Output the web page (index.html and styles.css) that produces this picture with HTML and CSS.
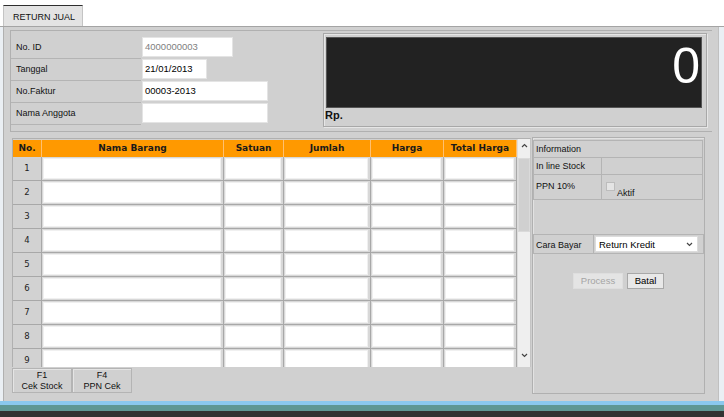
FILE: index.html
```html
<!DOCTYPE html>
<html>
<head>
<meta charset="utf-8">
<title>Return Jual</title>
<link rel="stylesheet" href="styles.css">
</head>
<body>
<div class="tabbar"><div class="tab">RETURN JUAL</div></div>
<div class="panel">
  <div class="top">
    <div class="form">
      <div class="frow"><span class="flabel">No. ID</span><span class="input w91 muted">4000000003</span></div>
      <div class="frow"><span class="flabel">Tanggal</span><span class="input w65">21/01/2013</span></div>
      <div class="frow"><span class="flabel">No.Faktur</span><span class="input w126">00003-2013</span></div>
      <div class="frow"><span class="flabel">Nama Anggota</span><span class="input w126"></span></div>
    </div>
    <div class="display">
      <div class="screenbox"><span class="amount">0</span></div>
      <div class="rp">Rp.</div>
    </div>
  </div>
  <div class="main">
    <div class="left">
      <div class="grid">
        <div class="scroll">
          <div class="hrow">
            <div class="hc c1">No.</div>
            <div class="hc c2">Nama Barang</div>
            <div class="hc c3">Satuan</div>
            <div class="hc c4">Jumlah</div>
            <div class="hc c5">Harga</div>
            <div class="hc c6">Total Harga</div>
          </div>
          <div class="row"><div class="num c1">1</div><div class="dc c2"><div class="box"></div></div><div class="dc c3"><div class="box"></div></div><div class="dc c4"><div class="box"></div></div><div class="dc c5"><div class="box"></div></div><div class="dc c6"><div class="box"></div></div></div>
          <div class="row"><div class="num c1">2</div><div class="dc c2"><div class="box"></div></div><div class="dc c3"><div class="box"></div></div><div class="dc c4"><div class="box"></div></div><div class="dc c5"><div class="box"></div></div><div class="dc c6"><div class="box"></div></div></div>
          <div class="row"><div class="num c1">3</div><div class="dc c2"><div class="box"></div></div><div class="dc c3"><div class="box"></div></div><div class="dc c4"><div class="box"></div></div><div class="dc c5"><div class="box"></div></div><div class="dc c6"><div class="box"></div></div></div>
          <div class="row"><div class="num c1">4</div><div class="dc c2"><div class="box"></div></div><div class="dc c3"><div class="box"></div></div><div class="dc c4"><div class="box"></div></div><div class="dc c5"><div class="box"></div></div><div class="dc c6"><div class="box"></div></div></div>
          <div class="row"><div class="num c1">5</div><div class="dc c2"><div class="box"></div></div><div class="dc c3"><div class="box"></div></div><div class="dc c4"><div class="box"></div></div><div class="dc c5"><div class="box"></div></div><div class="dc c6"><div class="box"></div></div></div>
          <div class="row"><div class="num c1">6</div><div class="dc c2"><div class="box"></div></div><div class="dc c3"><div class="box"></div></div><div class="dc c4"><div class="box"></div></div><div class="dc c5"><div class="box"></div></div><div class="dc c6"><div class="box"></div></div></div>
          <div class="row"><div class="num c1">7</div><div class="dc c2"><div class="box"></div></div><div class="dc c3"><div class="box"></div></div><div class="dc c4"><div class="box"></div></div><div class="dc c5"><div class="box"></div></div><div class="dc c6"><div class="box"></div></div></div>
          <div class="row"><div class="num c1">8</div><div class="dc c2"><div class="box"></div></div><div class="dc c3"><div class="box"></div></div><div class="dc c4"><div class="box"></div></div><div class="dc c5"><div class="box"></div></div><div class="dc c6"><div class="box"></div></div></div>
          <div class="row"><div class="num c1">9</div><div class="dc c2"><div class="box"></div></div><div class="dc c3"><div class="box"></div></div><div class="dc c4"><div class="box"></div></div><div class="dc c5"><div class="box"></div></div><div class="dc c6"><div class="box"></div></div></div>
        </div>
        <div class="scrollbar">
          <div class="arrow"><svg width="7" height="5" viewBox="0 0 7 5"><polyline points="1,4 3.5,1.5 6,4" fill="none" stroke="#444" stroke-width="1.2"/></svg></div>
          <div class="thumb"></div>
          <div class="track"></div>
          <div class="arrow"><svg width="7" height="5" viewBox="0 0 7 5"><polyline points="1,1 3.5,3.5 6,1" fill="none" stroke="#444" stroke-width="1.2"/></svg></div>
        </div>
      </div>
      <div class="fkeys">
        <div class="fkey">F1<br>Cek Stock</div>
        <div class="fkey">F4<br>PPN Cek</div>
      </div>
    </div>
    <div class="side">
      <div class="info">
        <div class="irow h17"><div class="icell full">Information</div></div>
        <div class="irow h17"><div class="icell lc">In line Stock</div><div class="icell rc"></div></div>
        <div class="irow h25"><div class="icell lc mid">PPN 10%</div><div class="icell rc chk"><span class="cbox"></span><span class="aktif">Aktif</span></div></div>
      </div>
      <div class="pay">
        <div class="paylabel">Cara Bayar</div>
        <div class="select"><span>Return Kredit</span><svg width="7" height="5" viewBox="0 0 7 5"><polyline points="1,1 3.5,3.5 6,1" fill="none" stroke="#444" stroke-width="1.2"/></svg></div>
      </div>
      <div class="actions">
        <div class="btn disabled">Process</div>
        <div class="btn">Batal</div>
      </div>
    </div>
  </div>
</div>
<div class="strip1"></div>
<div class="strip2"></div>
<div class="strip3"></div>
</body>
</html>
```
FILE: styles.css
```css
* { box-sizing: border-box; margin: 0; padding: 0; }
html, body { width: 724px; height: 417px; overflow: hidden; }
body {
  background: #eaeff4;
  font-family: "Liberation Sans", Arial, sans-serif;
  font-size: 9px;
  color: #111;
}
.tabbar {
  height: 27px;
  padding: 5px 0 0 3px;
  border-bottom: 1px solid #a4a4a4;
  background: #fff;
  display: flex;
}
.tab {
  width: 80px;
  height: 21px;
  background: #e3e3e3;
  border-top: 1px solid #2e2e2e;
  border-left: 1px solid #c4c4c4;
  border-right: 1px solid #c4c4c4;
  padding: 6px 0 0 9px;
  font-size: 9px;
  color: #111;
}
.panel {
  margin-left: 3px;
  width: 716px;
  height: 374px;
  background: #d0d0d0;
  border-left: 1px solid #b0b0b0;
  border-right: 1px solid #c0c0c0;
  padding: 3px 0 0 6px;
}
.top {
  width: 702px;
  height: 102px;
  border: 1px solid #b0b0b0;
  border-right: none;
  display: flex;
}
.form { width: 308px; padding-top: 6px; }
.frow { display: flex; height: 22px; }
.flabel {
  width: 130px;
  height: 22px;
  border-bottom: 1px solid #b4b4b4;
  padding-left: 5px;
  line-height: 21px;
  font-size: 9px;
}
.input {
  height: 20px;
  margin-left: 1px;
  background: #fff;
  border: 1px solid #e4e4e4;
  padding-left: 2px;
  line-height: 18px;
  font-size: 9.5px;
  color: #000;
}
.input.muted { color: #808080; }
.w91 { width: 91px; }
.w65 { width: 65px; }
.w126 { width: 126px; }
.display {
  width: 384px;
  height: 94px;
  margin: 2px 0 0 4px;
  border: 1px solid #a8a8a8;
  box-shadow: inset 1px 1px 0 #e6e6e6, 1px 1px 0 #e6e6e6;
}
.screenbox {
  margin: 3px 0 0 2px;
  width: 376px;
  height: 71px;
  background: #222;
  border: 1px solid #555;
  text-align: right;
  padding-right: 1px;
}
.amount {
  color: #fff;
  font-size: 50px;
  line-height: 56px;
  font-family: "Liberation Sans", Arial, sans-serif;
}
.rp {
  font-weight: bold;
  font-size: 11px;
  line-height: 14px;
  padding-left: 1px;
  color: #111;
}
.main { display: flex; margin-top: 5px; }
.left { margin: 1px 0 0 2px; }
.grid {
  width: 519px;
  height: 229px;
  border-left: 1px solid #b0b0b0;
  border-top: 1px solid #b0b0b0;
  border-right: 1px solid #c4c4c4;
  display: flex;
  overflow: hidden;
}
.scroll { width: 504px; padding-top: 1px; }
.hrow { display: flex; height: 17px; }
.hc {
  background: #ff9900;
  border-right: 1px solid #ffc070;
  text-align: center;
  line-height: 17px;
  font-family: "DejaVu Sans", Verdana, sans-serif;
  font-weight: bold;
  font-size: 9px;
  color: #1a1a1a;
}
.c1 { width: 29px; }
.c2 { width: 182px; }
.c3 { width: 60px; }
.c4 { width: 87px; }
.c5 { width: 73px; }
.c6 { width: 73px; }
.row { display: flex; height: 24px; }
.num {
  background: #d2d2d2;
  border-right: 1px solid #a8a8a8;
  border-bottom: 1px solid #a8a8a8;
  text-align: center;
  line-height: 23px;
  font-family: "DejaVu Sans", Verdana, sans-serif;
  font-size: 8.5px;
  color: #222;
}
.dc {
  border-right: 1px solid #a8a8a8;
  border-bottom: 1px solid #a8a8a8;
  background: #d8d8d8;
  padding: 1px 2px 1px 1px;
}
.box {
  height: 100%;
  background: #fff;
  border: 1px solid #f0f0f0;
}
.scrollbar {
  width: 13px;
  background: #efefef;
  border-left: 1px solid #dcdcdc;
  display: flex;
  flex-direction: column;
}
.arrow { height: 13px; display: flex; align-items: center; justify-content: center; }
.thumb {
  margin-top: 6px;
  height: 74px;
  background: #d0d0d0;
  border: 1px solid #dadada;
}
.track { flex: 1; }
.scrollbar .arrow:last-child { height: 16px; margin-bottom: 4px; }
.fkeys { display: flex; margin-top: 1px; }
.fkey {
  width: 60px;
  height: 25px;
  border: 1px solid #b4b4b4;
  box-shadow: inset 1px 1px 0 #e4e4e4;
  text-align: center;
  font-size: 9px;
  line-height: 11px;
  padding-top: 1px;
  color: #111;
}
.side {
  width: 173px;
  height: 257px;
  margin-left: 1px;
  border: 1px solid #b0b0b0;
  box-shadow: inset 1px 1px 0 #e2e2e2;
  padding: 1px 0 0 0;
}
.info {
  margin-top: 1px;
  width: 170px;
  border-top: 1px solid #b4b4b4;
  border-left: 1px solid #b4b4b4;
}
.irow { display: flex; }
.h17 { height: 17px; }
.h25 { height: 25px; }
.icell {
  border-right: 1px solid #b4b4b4;
  border-bottom: 1px solid #b4b4b4;
  padding-left: 2px;
  line-height: 16px;
  font-size: 9px;
  color: #111;
}
.full { width: 169px; }
.lc { width: 68px; }
.rc { width: 101px; }
.mid { line-height: 22px; }
.chk { display: flex; align-items: flex-start; padding-left: 4px; }
.cbox {
  width: 9px;
  height: 9px;
  margin-top: 7px;
  background: #e4e4e4;
  border: 1px solid #bcbcbc;
}
.aktif { margin: 13px 0 0 2px; line-height: 10px; font-size: 9px; }
.pay {
  margin-top: 34px;
  width: 171px;
  height: 20px;
  border: 1px solid #b4b4b4;
  display: flex;
}
.paylabel {
  width: 60px;
  border-right: 1px solid #b4b4b4;
  padding-left: 2px;
  line-height: 20px;
  font-size: 9px;
}
.select {
  width: 103px;
  height: 16px;
  margin: 1px 0 0 1px;
  background: #fff;
  border: 1px solid #dcdcdc;
  display: flex;
  align-items: center;
  justify-content: space-between;
  padding: 0 4px 0 3px;
  font-size: 9.5px;
  color: #000;
}
.actions {
  margin-top: 19px;
  display: flex;
  justify-content: center;
  gap: 4px;
}
.btn {
  height: 16px;
  padding: 0 6px;
  border: 1px solid #a8a8a8;
  background: #e8e8e8;
  font-size: 9.5px;
  line-height: 14px;
  text-align: center;
  color: #000;
}
.btn.disabled {
  width: 50px;
  border-color: #dedede;
  background: #e4e4e4;
  color: #a4a4a4;
}
.btn:last-child { width: 37px; }
.strip1 { height: 4px; background: #8ac8ee; }
.strip2 { height: 6px; background: #5e9794; }
.strip3 { height: 6px; background: #323232; }
```
